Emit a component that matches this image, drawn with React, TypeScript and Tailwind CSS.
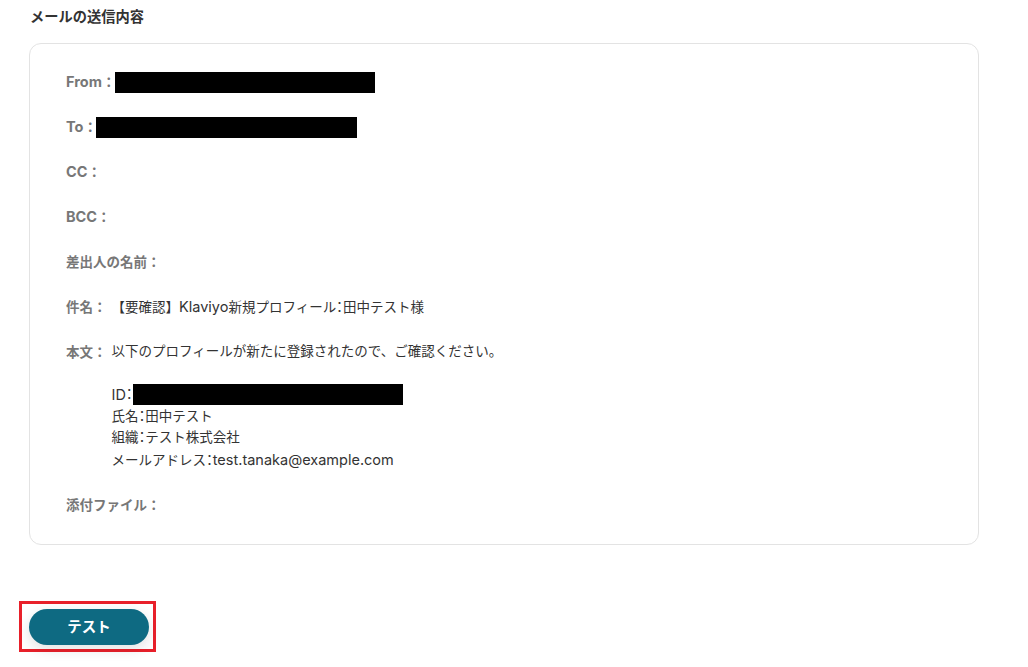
import React from "react";

const font = { fontFamily: '"Inter", "Noto Sans CJK JP", "Noto Sans", sans-serif' };

function C() {
  return <span className="[font-feature-settings:'palt']">：</span>;
}

function L({ children }: { children: React.ReactNode }) {
  return <span className="text-[14.5px]">{children}</span>;
}

function Row({ label, children, top }: { label: React.ReactNode; children?: React.ReactNode; top?: boolean }) {
  return (
    <div className={`flex ${top ? "items-start" : "items-center h-[22px]"}`}>
      <div className="text-[13.5px] font-bold text-[#777] leading-[22px] whitespace-nowrap">{label}</div>
      <div className="text-[13.5px] text-[#333] leading-[21.5px] ml-[5px] whitespace-nowrap">{children}</div>
    </div>
  );
}

function Redact({ w, off = 0 }: { w: number; off?: number }) {
  return <span className="inline-block bg-black h-[21px] align-middle" style={{ width: w, marginLeft: off }} />;
}

export default function App() {
  return (
    <div className="w-[1028px] h-[667px] bg-white relative overflow-hidden" style={font}>
      <div className="pl-[30px] pt-[7px] text-[14.25px] font-bold text-[#333] leading-[20px]">メールの送信内容</div>
      <div className="ml-[29px] mt-[16px] w-[950px] h-[502px] border border-[#e3e3e3] rounded-[12px] pl-[36px] pt-[27px]">
        <div className="flex flex-col gap-[23px]">
          <Row label={<><L>From</L>：</>}><Redact w={260} off={-5} /></Row>
          <Row label={<><L>To</L>：</>}><Redact w={261} off={-6} /></Row>
          <Row label={<><L>CC</L>：</>} />
          <Row label={<><L>BCC</L>：</>} />
          <Row label="差出人の名前：" />
          <Row label="件名：">【要確認】<L>Klaviyo</L>新規プロフィール<C />田中テスト様</Row>
          <Row label="本文：" top>
            <div>以下のプロフィールが新たに登録されたので、ご確認ください。</div>
            <div className="h-[21.5px]" />
            <div className="flex items-center h-[21.5px]"><L>ID</L><C /><Redact w={270} /></div>
            <div>氏名<C />田中テスト</div>
            <div>組織<C />テスト株式会社</div>
            <div>メールアドレス<C /><L>test.tanaka@example.com</L></div>
          </Row>
          <Row label="添付ファイル：" />
        </div>
      </div>
      <div className="absolute left-[19px] top-[601px] w-[137px] h-[51px] border-[3px] border-[#e8202a]" />
      <div className="absolute left-[29px] top-[609px] w-[120px] h-[36px] rounded-full bg-[#0e6a82] text-white font-bold text-[14.5px] flex items-center justify-center shadow-[0_4px_14px_rgba(0,0,0,0.12)]">
        テスト
      </div>
    </div>
  );
}
